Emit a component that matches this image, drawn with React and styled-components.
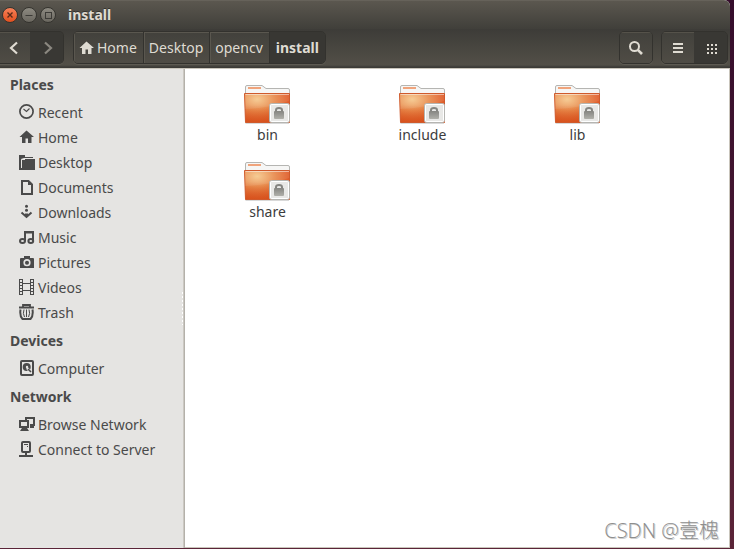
import React from 'react';
import styled, {createGlobalStyle, css} from 'styled-components';

const GlobalStyle = createGlobalStyle`
  *, *::before, *::after {
    box-sizing: border-box;
  }

  body {
    margin: 0;
    background: linear-gradient(#350d2c, #5b2438);
    font-family: "Noto Sans", "Open Sans", sans-serif;
    font-size: 14px;
    color: #4a4a4a;
  }

  button {
    margin: 0;
    padding: 0;
    border: 0;
    background: none;
    font: inherit;
    color: inherit;
  }
`;

const Window = styled.div`
  position: relative;
  display: flex;
  flex-direction: column;
  min-height: calc(100vh - 1px);
  margin: 0 4px 1px 0;
  border-radius: 0 6px 0 0;
  overflow: hidden;
  background: white;
`;

const TitleBar = styled.header`
  display: flex;
  align-items: center;
  gap: 3px;
  height: 29px;
  padding: 0 2px;
  border-top: 1px solid #66625a;
  background: linear-gradient(#5b574f, #403f3a);
`;

const WindowButton = styled.button`
  display: flex;
  width: 16px;
  height: 16px;
  border: 1px solid #35342f;
  border-radius: 50%;
  background: linear-gradient(#8d8a81, #6a675f);

  ${({$close}) => $close && css`
    background: linear-gradient(#f78159, #e2501f);
  `}
`;

const Title = styled.h1`
  margin: 0 0 0 9px;
  font-size: 14px;
  line-height: 20px;
  color: #dfdbd2;
  text-shadow: 0 -1px #33322e;
`;

const Toolbar = styled.div`
  display: flex;
  height: 40px;
  padding: 2px 2px 4px 0;
  border-bottom: 1px solid #c9c5bb;
  background: linear-gradient(#3d3c38, #524f47 36px, #3c3b37 38px);
`;

const ButtonGroup = styled.div`
  display: flex;
  margin-left: ${({$left}) => $left || 0}px;
  border: 1px solid #33322e;
  border-radius: 5px;
  overflow: hidden;
  box-shadow: 0 1px #5d5a52;

  ${({$attached}) => $attached && css`
    margin-left: -2px;
    border-left: 0;
    border-radius: 0 5px 5px 0;
  `}
`;

const ToolButton = styled.button`
  display: flex;
  align-items: center;
  justify-content: center;
  width: 32px;
  background: linear-gradient(#42413c, #4f4c45);
  color: #dfdbd2;
  box-shadow: inset 0 1px #55524a;

  ${({$dark}) => $dark && css`
    width: 33px;
    background: #393834;
    box-shadow: none;
  `}
`;

const PathBar = styled.nav`
  display: flex;
  margin-left: 9px;
  border: 1px solid #33322e;
  border-radius: 5px;
  overflow: hidden;
  box-shadow: 0 1px #5d5a52;
`;

const Crumb = styled.a`
  display: flex;
  align-items: center;
  gap: 2px;
  padding: 0 6px 0 5px;
  border-right: 1px solid #33322e;
  background: linear-gradient(#42413c, #4f4c45);
  box-shadow: inset 1px 1px #5a574f;
  color: #dfdbd2;
  text-decoration: none;

  ${({$current}) => $current && css`
    padding: 0 6px;
    border-right: 0;
    background: #383733;
    box-shadow: none;
    font-weight: bold;
  `}
`;

const Spacer = styled.div`
  flex: 1;
`;

const Body = styled.div`
  display: flex;
  flex: 1;
`;

const Sidebar = styled.aside`
  position: relative;
  flex: none;
  width: 185px;
  border-right: 1px solid #b4b1aa;
  background: #e5e4e2;
  box-shadow: inset -1px 0 #cbc8c2;
`;

const Grip = styled.span`
  position: absolute;
  top: 222px;
  right: 0;
  width: 3px;
  height: 34px;
  background: radial-gradient(circle, white 1px, transparent 1px) 0 0 / 3px 4px;
`;

const SectionTitle = styled.h2`
  margin: 0;
  padding-left: 10px;
  font-size: 14px;
  line-height: 31px;
`;

const PlaceList = styled.ul`
  margin: 0;
  padding: 0;
  list-style: none;
`;

const Place = styled.a`
  display: flex;
  gap: 3px;
  height: 25px;
  padding: 0 0 0 19px;
  line-height: 25px;
  color: #4a4a4a;
  text-decoration: none;
  white-space: nowrap;

  svg {
    flex: none;
    margin-top: 4px;
  }
`;

const Files = styled.main`
  display: grid;
  flex: 1;
  grid-template-columns: repeat(auto-fill, 155px);
  grid-auto-rows: 60px;
  row-gap: 17px;
  padding: 15px 5px;
  border-right: 1px solid #c9c5bb;
  border-bottom: 1px solid #c9c5bb;
`;

const File = styled.button`
  display: flex;
  flex-direction: column;
  align-items: center;
  line-height: 18px;
  color: #3c3c3c;
`;

const Watermark = styled.div`
  position: absolute;
  right: 11px;
  bottom: 4px;
  font-family: "Open Sans", "Noto Sans CJK SC", sans-serif;
  font-size: 20px;
  font-weight: 300;
  line-height: 26px;
  color: #8e8e8e;
  text-shadow: 1px 1px #d0d0d0;
`;

const homePath = 'M7.5 1.5 L0.5 8 H3 V14 H6.5 V9.5 H9 V14 H12.5 V8 H15 Z';

const icons = {
    recent: (
        <>
            <circle cx="7.5" cy="7.5" r="6.6" fill="none" stroke="currentColor" strokeWidth="1.7"/>
            <path d="M4.5 5 L7.5 7.5 L10.5 4.5" fill="none" stroke="currentColor" strokeWidth="1.1"/>
        </>
    ),
    home: <path d={homePath}/>,
    desktop: (
        <>
            <path d="M0 1 H6 V3 H14 V4 H5 L2 5 V16 H0 Z"/>
            <path d="M3 5 H16 V16 H2 V6 Z"/>
            <path d="M2.5 14 V5.5 H6" fill="none" stroke="#e5e4e2"/>
        </>
    ),
    documents: (
        <>
            <path d="M3 2 H9.5 L13 5.5 V15 H3 Z" fill="none" stroke="currentColor" strokeWidth="2"/>
            <path d="M9 2 V6 H13 Z"/>
        </>
    ),
    downloads: (
        <>
            <circle cx="7.5" cy="2.3" r="1.5"/>
            <circle cx="7.5" cy="6.3" r="1.5"/>
            <path d="M2.5 8.5 L7.5 13 L12.5 8.5" fill="none" stroke="currentColor" strokeWidth="2"/>
            <path d="M6 9.5 H9 V12 H6 Z"/>
        </>
    ),
    music: (
        <>
            <path d="M6 12 V3 H14 V12" fill="none" stroke="currentColor" strokeWidth="2"/>
            <path d="M7 4 H13 V5 H7 Z" opacity="0.5"/>
            <ellipse cx="3.5" cy="12" rx="2.5" ry="2" fill="none" stroke="currentColor" strokeWidth="2"/>
            <ellipse cx="11.8" cy="12" rx="2.4" ry="2" fill="none" stroke="currentColor" strokeWidth="2"/>
        </>
    ),
    pictures: (
        <>
            <path d="M5 2 H11 V4 H14 Q15 4 15 5 V14 H1 V5 Q1 4 2 4 H5 Z"/>
            <circle cx="8" cy="8.7" r="2.8" fill="none" stroke="#e5e4e2" strokeWidth="1.6"/>
        </>
    ),
    videos: (
        <>
            <path d="M0.5 0 V16 M3.5 0 V16 M11.5 0 V16 M14.5 0 V16 M4 4.5 H11 M4 11.5 H11" fill="none"
                  stroke="currentColor"/>
            <path d="M2 0 V16 M13 0 V16" fill="none" stroke="currentColor" strokeWidth="2" strokeDasharray="1 2"/>
        </>
    ),
    trash: (
        <>
            <path d="M0 3.5 H15 M4 3 V1 H11 V3" fill="none" stroke="currentColor" strokeWidth="1.8"/>
            <path d="M1.5 5.5 Q0.5 12 3.5 15 H11.5 Q14.5 12 13.5 5.5" fill="none" stroke="currentColor"
                  strokeWidth="2"/>
            <path d="M5 5.5 Q3.5 9.5 5.5 13 M7.5 5.5 V13 M10 5.5 Q11.5 9.5 9.5 13" fill="none"
                  stroke="currentColor"/>
        </>
    ),
    computer: (
        <>
            <rect x="2" y="1" width="12" height="14" rx="1" fill="none" stroke="currentColor" strokeWidth="2"/>
            <circle cx="7.7" cy="7" r="4"/>
            <circle cx="8" cy="7" r="1.2" fill="#e5e4e2"/>
            <path d="M8 8 L11.5 12" fill="none" stroke="#e5e4e2" strokeWidth="2.5"/>
            <path d="M9 9 L12 12" fill="none" stroke="currentColor" strokeWidth="1.6"/>
        </>
    ),
    network: (
        <>
            <path d="M7 4 V2 H15 V9 H11" fill="none" stroke="currentColor" strokeWidth="2"/>
            <path d="M11 10 H15 V12 H11 Z"/>
            <rect x="1" y="5" width="8" height="6" fill="#e5e4e2" stroke="currentColor" strokeWidth="2"/>
            <path d="M3 12 H8 L10 15 H1 Z"/>
        </>
    ),
    server: (
        <>
            <rect x="3" y="1" width="8" height="10" rx="1" fill="none" stroke="currentColor" strokeWidth="2"/>
            <path d="M5 3 H9 V4 H5 Z M8 5 H9 V6 H8 Z M6 11 H8 V14 H14 V16 H0 V14 H6 Z"/>
        </>
    )
};

const Icon = ({name}) => (
    <svg width="16" height="16" viewBox="0 0 16 16" fill="currentColor" aria-hidden="true">
        {icons[name]}
    </svg>
);

const FolderIcon = () => (
    <svg width="47" height="42" viewBox="0 0 47 42" aria-hidden="true">
        <defs>
            <radialGradient id="folder" cx="0.28" cy="0.2" r="0.8">
                <stop offset="0" stopColor="#f5c88c"/>
                <stop offset="0.5" stopColor="#e8894b"/>
                <stop offset="1" stopColor="#dd4f1f"/>
            </radialGradient>
            <linearGradient id="shade" x1="0" y1="0" x2="0" y2="1">
                <stop offset="0.4" stopColor="#d4541c" stopOpacity="0"/>
                <stop offset="1" stopColor="#d4541c" stopOpacity="0.6"/>
            </linearGradient>
            <linearGradient id="lock" x1="0" y1="0" x2="0" y2="1">
                <stop offset="0" stopColor="#858581"/>
                <stop offset="1" stopColor="#b0b0aa"/>
            </linearGradient>
        </defs>
        <path d="M1.5 39 H45" stroke="#000" strokeOpacity="0.15" strokeWidth="2"/>
        <path d="M1.5 14 V3 Q1.5 1.5 3 1.5 H18 L22 4.5 H44 Q45.5 4.5 45.5 6 V14 Z" fill="#f6f6f5" stroke="#b5b5b2"/>
        <rect x="4" y="3" width="13" height="2" fill="#f0a47c"/>
        <path d="M0.5 9.5 H45.5 V38.5 H1.5 Z" fill="url(#folder)"/>
        <path d="M0.5 9.5 H45.5 V38.5 H1.5 Z" fill="url(#shade)" stroke="#cf5a2c"/>
        <path d="M1.5 10.5 H45" stroke="#fff" strokeOpacity="0.5"/>
        <path d="M1 25 Q26 24 45 17 V10 H1 Z" fill="#fff" fillOpacity="0.08"/>
        <rect x="25.5" y="19.5" width="20" height="19" rx="2" fill="#e8e8e6" stroke="#b5b5b1"/>
        <rect x="26.5" y="20.5" width="18" height="17" rx="1" fill="none" stroke="#fff"/>
        <path d="M32 28 V26 Q32 24 35 24 Q38 24 38 26 V28" fill="none" stroke="#858581" strokeWidth="2"/>
        <rect x="30" y="27" width="10" height="8" rx="1" fill="url(#lock)"/>
    </svg>
);

const sections = [
    {
        title: 'Places',
        items: [
            ['recent', 'Recent'],
            ['home', 'Home'],
            ['desktop', 'Desktop'],
            ['documents', 'Documents'],
            ['downloads', 'Downloads'],
            ['music', 'Music'],
            ['pictures', 'Pictures'],
            ['videos', 'Videos'],
            ['trash', 'Trash']
        ]
    },
    {title: 'Devices', items: [['computer', 'Computer']]},
    {title: 'Network', items: [['network', 'Browse Network'], ['server', 'Connect to Server']]}
];

const files = ['bin', 'include', 'lib', 'share'];

const Header = () => (
    <>
        <TitleBar>
            <WindowButton $close aria-label="Close">
                <svg width="14" height="14" viewBox="0 0 14 14" stroke="#5a2a18" strokeWidth="1.4">
                    <path d="M4.5 4.5 L9.5 9.5 M9.5 4.5 L4.5 9.5"/>
                </svg>
            </WindowButton>
            <WindowButton aria-label="Minimize">
                <svg width="14" height="14" viewBox="0 0 14 14" stroke="#3c3b37">
                    <path d="M3.5 7.5 H10.5"/>
                </svg>
            </WindowButton>
            <WindowButton aria-label="Maximize">
                <svg width="14" height="14" viewBox="0 0 14 14" stroke="#3c3b37" fill="none">
                    <rect x="4.5" y="4.5" width="6" height="6"/>
                </svg>
            </WindowButton>
            <Title>install</Title>
        </TitleBar>
        <Toolbar>
            <ButtonGroup $attached>
                <ToolButton aria-label="Back">
                    <svg width="16" height="16" viewBox="0 0 16 16" fill="none" stroke="currentColor" strokeWidth="2.2">
                        <path d="M11 2.5 L5 8 L11 13.5"/>
                    </svg>
                </ToolButton>
                <ToolButton $dark aria-label="Forward">
                    <svg width="16" height="16" viewBox="0 0 16 16" fill="none" stroke="#8b8880" strokeWidth="2.2">
                        <path d="M6 2.5 L12 8 L6 13.5"/>
                    </svg>
                </ToolButton>
            </ButtonGroup>
            <PathBar aria-label="Path">
                <Crumb href="#home">
                    <Icon name="home"/>
                    Home
                </Crumb>
                <Crumb href="#desktop">Desktop</Crumb>
                <Crumb href="#opencv">opencv</Crumb>
                <Crumb href="#install" $current>install</Crumb>
            </PathBar>
            <Spacer/>
            <ButtonGroup>
                <ToolButton aria-label="Search">
                    <svg width="16" height="16" viewBox="0 0 16 16" fill="none" stroke="currentColor">
                        <circle cx="6.5" cy="6.5" r="4.5" strokeWidth="2"/>
                        <path d="M9.8 9.8 L14 14" strokeWidth="2.6"/>
                    </svg>
                </ToolButton>
            </ButtonGroup>
            <ButtonGroup $left={8}>
                <ToolButton aria-label="List view">
                    <svg width="16" height="16" viewBox="0 0 16 16" fill="currentColor">
                        <path d="M3 3 H13 V5 H3 Z M3 7 H13 V9 H3 Z M3 11 H13 V13 H3 Z"/>
                    </svg>
                </ToolButton>
                <ToolButton $dark aria-label="Icon view">
                    <svg width="16" height="16" viewBox="0 0 16 16" fill="none" stroke="currentColor" strokeWidth="2"
                         strokeDasharray="2 2">
                        <path d="M4 5 H14 M4 9 H14 M4 13 H14"/>
                    </svg>
                </ToolButton>
            </ButtonGroup>
        </Toolbar>
    </>
);

const App = () => {
    return (
        <>
            <GlobalStyle/>
            <Window>
                <Header/>
                <Body>
                    <Sidebar>
                        {sections.map(({title, items}) => (
                            <section key={title}>
                                <SectionTitle>{title}</SectionTitle>
                                <PlaceList>
                                    {items.map(([icon, label]) => (
                                        <li key={label}>
                                            <Place href={`#${icon}`}>
                                                <Icon name={icon}/>
                                                {label}
                                            </Place>
                                        </li>
                                    ))}
                                </PlaceList>
                            </section>
                        ))}
                        <Grip/>
                    </Sidebar>
                    <Files>
                        {files.map((name) => (
                            <File key={name}>
                                <FolderIcon/>
                                {name}
                            </File>
                        ))}
                    </Files>
                </Body>
                <Watermark>CSDN @壹槐</Watermark>
            </Window>
        </>
    )
}

export default App;
